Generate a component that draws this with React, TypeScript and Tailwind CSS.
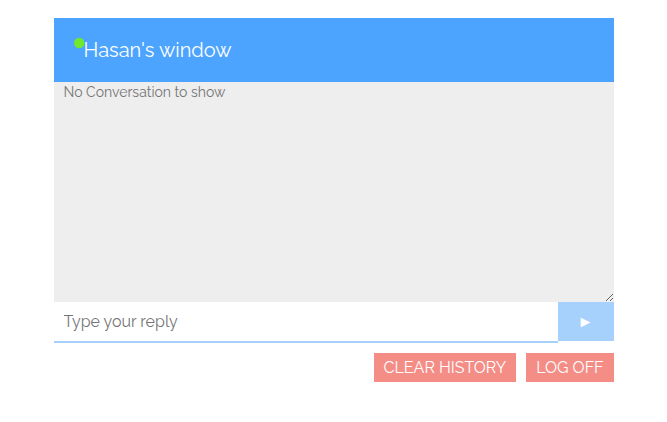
import React from "react";

export default function App() {
  return (
    <main className="mx-auto max-w-[560px] pt-[18px] pb-10 font-[Raleway,Lato,sans-serif]">
      <header className="flex h-16 items-center bg-[#4ca4ff] px-5 text-white">
        <svg className="mb-[14px] size-[10px] overflow-visible" viewBox="0 0 10 10" aria-hidden="true">
          <circle cx="5.2" cy="5" r="5.2" fill="#6fe82e" />
        </svg>
        <h1 className="text-[20px] leading-6">Hasan's window</h1>
      </header>
      <textarea
        aria-label="Conversation"
        placeholder="No Conversation to show"
        className="block h-[220px] w-full resize bg-[#eeeeee] px-[10px] text-[14px] leading-5 text-[#757575] outline-none placeholder:text-[#757575]"
      />
      <form className="flex items-start" onSubmit={(e) => e.preventDefault()}>
        <input
          type="text"
          aria-label="Reply"
          placeholder="Type your reply"
          className="h-[41px] min-w-0 flex-1 border-b-2 border-[#a6d1fc] px-[10px] text-[16px] text-[#757575] outline-none placeholder:text-[#757575]"
        />
        <button
          type="submit"
          aria-label="Send"
          className="h-[39px] w-14 bg-[#a6d1fc] text-[16px] text-white"
        >
          ►
        </button>
      </form>
      <div className="mt-[10px] flex justify-end gap-[10px] text-[16px] leading-[29px] text-white">
        <button type="button" className="bg-[#f38d86] px-[10px]">
          CLEAR HISTORY
        </button>
        <button type="button" className="bg-[#f38d86] px-[10px]">
          LOG OFF
        </button>
      </div>
    </main>
  );
}
